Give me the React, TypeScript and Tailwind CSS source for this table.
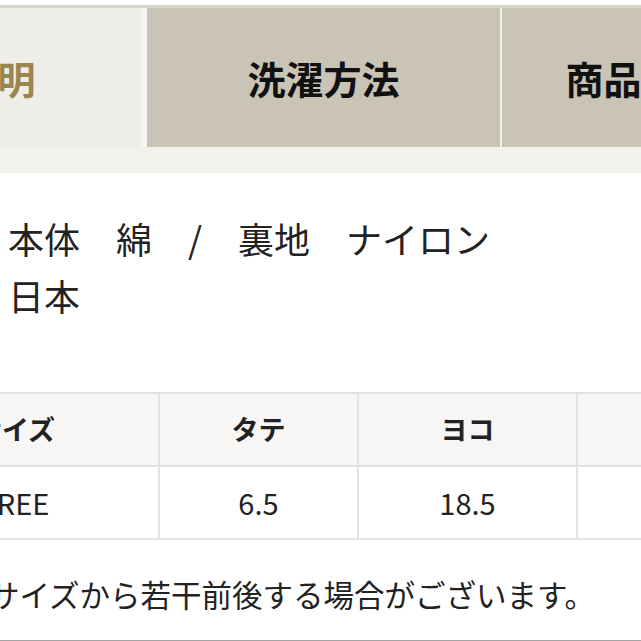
const FONT = "font-['Noto_Sans_CJK_JP','Noto_Sans',sans-serif]"

const TABLE_HEAD = ['サイズ', 'タテ', 'ヨコ', 'マチ']
const TABLE_ROW = ['FREE', '6.5', '18.5', '2']

export default function App() {
  return (
    <div className={`w-[641px] h-[641px] overflow-hidden bg-white ${FONT}`}>
      <div className="h-[5px] bg-white" />

      {/* Tabs */}
      <div className="flex h-[142px] border-t-[3px] border-[#d6d3cd]">
        <div className="flex-none w-[370px] -ml-[223px] flex items-center justify-center bg-[#eeede8] border-r-[5px] border-[#f6f5f1]">
          <span className="text-[38px] font-bold text-[#9c8650]">商品説明</span>
        </div>
        <div className="flex-none w-[355px] flex items-center justify-center bg-[#c9c4b6] border-r-2 border-[#f3f1ea]">
          <span className="text-[38px] font-bold text-[#111]">洗濯方法</span>
        </div>
        <div className="flex-none w-[316px] flex items-center justify-center bg-[#c9c4b6]">
          <span className="text-[38px] font-bold text-[#111] whitespace-nowrap">商品サイズ</span>
        </div>
      </div>
      <div className="h-[26px] bg-[#f3f1eb]" />

      {/* Material */}
      <div className="pt-[37px] pl-2 text-[36px] leading-[57px] text-[#222]">
        <p className="whitespace-pre">本体　綿　/　裏地　ナイロン</p>
        <p>日本</p>
      </div>

      {/* Size table */}
      <div className="mt-[68px] -ml-[130px] grid grid-cols-[288px_199px_219px_200px] border-t-2 border-l-2 border-[#e2e2e2] w-max text-[#222]">
        {TABLE_HEAD.map(h => (
          <div key={h} className="h-[73px] flex items-center justify-center bg-[#f7f6f4] border-r-2 border-b-2 border-[#e2e2e2] text-[27px] font-bold">
            {h}
          </div>
        ))}
        {TABLE_ROW.map(v => (
          <div key={v} className="h-[73px] flex items-center justify-center bg-white border-r-2 border-b-2 border-[#e2e2e2] text-[29px]">
            {v}
          </div>
        ))}
      </div>

      <p className="mt-[34px] -ml-[72px] h-[40px] leading-[40px] text-[30.5px] text-[#222] whitespace-nowrap">
        実寸サイズから若干前後する場合がございます。
      </p>
      <div className="mt-[26px] h-[3px] bg-[#a3a3a3]" />
    </div>
  )
}
